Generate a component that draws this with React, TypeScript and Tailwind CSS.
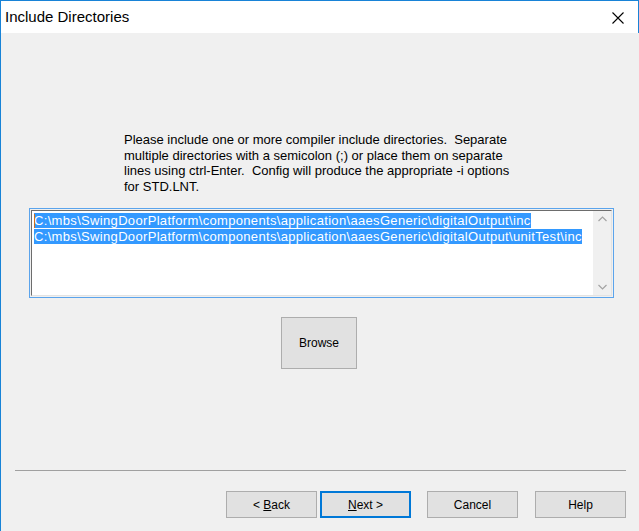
import React from 'react'

const font = { fontFamily: '"Liberation Sans", Arial, sans-serif' }

const Btn = ({ children, focused = false, className = '' }: { children: React.ReactNode; focused?: boolean; className?: string }) => (
    <div
        className={
            'w-[91px] h-[27px] flex items-center justify-center bg-[#e1e1e1] text-[12px] text-black ' +
            (focused ? 'border-2 border-[#0078d7] ' : 'border border-[#adadad] ') +
            className
        }
    >
        <span className="whitespace-pre">{children}</span>
    </div>
)

const App = () => {
    const paths = [
        'C:\\mbs\\SwingDoorPlatform\\components\\application\\aaesGeneric\\digitalOutput\\inc',
        'C:\\mbs\\SwingDoorPlatform\\components\\application\\aaesGeneric\\digitalOutput\\unitTest\\inc',
    ]

    return (
        <div className="w-[639px] h-[531px] flex flex-col border-l border-t border-[#1883d7] bg-[#f0f0f0]" style={font}>
            {/* title bar */}
            <div className="h-[32px] bg-white flex items-center justify-between pl-[4px] pr-[14px] border-r border-[#1883d7]">
                <span className="text-[15px] text-black">Include Directories</span>
                <svg width="12" height="12" viewBox="0 0 12 12" className="mt-[1px]">
                    <path d="M0.5 0.5 L11.5 11.5 M11.5 0.5 L0.5 11.5" stroke="#000" strokeWidth="1.1" fill="none" />
                </svg>
            </div>

            <div className="flex-1 flex flex-col">
                <p className="ml-[123px] mt-[99px] text-[13px] leading-[15.5px] text-black">
                    Please include one or more compiler include directories.&nbsp; Separate<br />
                    multiple directories with a semicolon (;) or place them on separate<br />
                    lines using ctrl-Enter.&nbsp; Config will produce the appropriate -i options<br />
                    for STD.LNT.
                </p>

                {/* multi line edit */}
                <div className="ml-[28px] mt-[14px] w-[585px] h-[90px] border border-[#5ba4ec] p-[1px] flex">
                    <div className="flex-1 flex border-t border-l border-[#6d6d6d] border-b border-r border-b-[#e3e3e3] border-r-[#e3e3e3] bg-white">
                        <div className="flex-1 pl-[2px] pt-[2px] text-[13px] leading-[16px] tracking-[0.33px] relative">
                            <div className="absolute left-[2px] top-[3px] w-[1px] h-[14px] bg-[#d07020]" />
                            {paths.map((p) => (
                                <div key={p} className="whitespace-pre">
                                    <span className="bg-[#3399ff] text-white">{p}</span>
                                </div>
                            ))}
                        </div>
                        <div className="w-[18px] bg-[#f0f0f0] flex flex-col items-center justify-between py-[5px]">
                            <svg width="9" height="6" viewBox="0 0 9 6">
                                <path d="M0.5 5 L4.5 1 L8.5 5" stroke="#a3a3a3" strokeWidth="1.2" fill="none" />
                            </svg>
                            <svg width="9" height="6" viewBox="0 0 9 6">
                                <path d="M0.5 1 L4.5 5 L8.5 1" stroke="#a3a3a3" strokeWidth="1.2" fill="none" />
                            </svg>
                        </div>
                    </div>
                </div>

                <div className="flex mt-[19px] pl-[280px]">
                    <div className="w-[76px] h-[52px] border border-[#adadad] bg-[#e1e1e1] flex items-center justify-center text-[12px] text-black">
                        Browse
                    </div>
                </div>

                <div className="ml-[14px] mr-[13px] mt-[101px] h-[1px] bg-[#a0a0a0]" />

                <div className="flex justify-end mt-[20px] pr-[13px]">
                    <Btn>
                        &lt; <u>B</u>ack
                    </Btn>
                    <Btn focused className="ml-[3px]">
                        <u>N</u>ext &gt;
                    </Btn>
                    <Btn className="ml-[16px]">Cancel</Btn>
                    <Btn className="ml-[17px]">Help</Btn>
                </div>
            </div>
        </div>
    )
}

export default App
